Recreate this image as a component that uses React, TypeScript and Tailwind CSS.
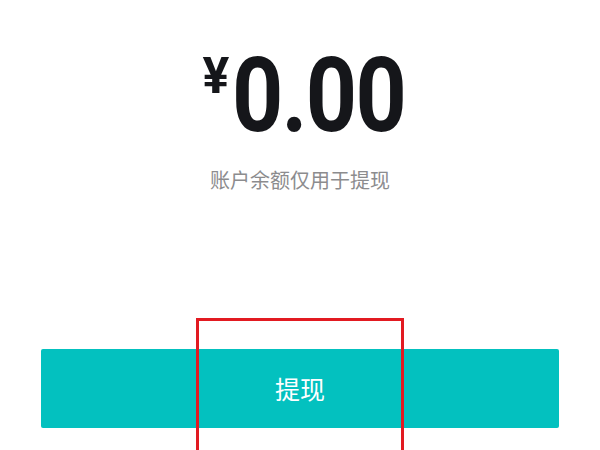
import React from "react";

export default function App() {
  return (
    <div className="relative w-[600px] h-[450px] overflow-hidden bg-white">
      <div className="flex flex-col items-center pt-[44px]">
        <div className="ml-[8px] flex items-start justify-center text-[#15161a]" style={{ fontFamily: "Roboto, 'Liberation Sans', sans-serif" }}>
          <span className="mt-[7px] text-[50px] leading-none font-bold">¥</span>
          <span className="ml-[3px] mr-[-28px] inline-block origin-left scale-x-[0.86] text-[104px] leading-none font-bold tracking-[-2px]">0.00</span>
        </div>
        <div
          className="mt-[22px] text-[20px] leading-none text-[#8c8c8e]"
          style={{ fontFamily: "'Noto Sans CJK SC', 'Noto Sans', sans-serif" }}
        >
          账户余额仅用于提现
        </div>
      </div>
      <div className="mt-[159px] px-[41px]">
        <button
          className="flex h-[79px] w-[518px] items-center justify-center rounded-[2px] bg-[#03c1bf] text-[25px] text-white"
          style={{ fontFamily: "'Noto Sans CJK SC', 'Noto Sans', sans-serif" }}
        >
          提现
        </button>
      </div>
      <div className="absolute left-[196px] top-[318px] h-[200px] w-[208px] border-[3px] border-[#e21a21]" />
    </div>
  );
}
